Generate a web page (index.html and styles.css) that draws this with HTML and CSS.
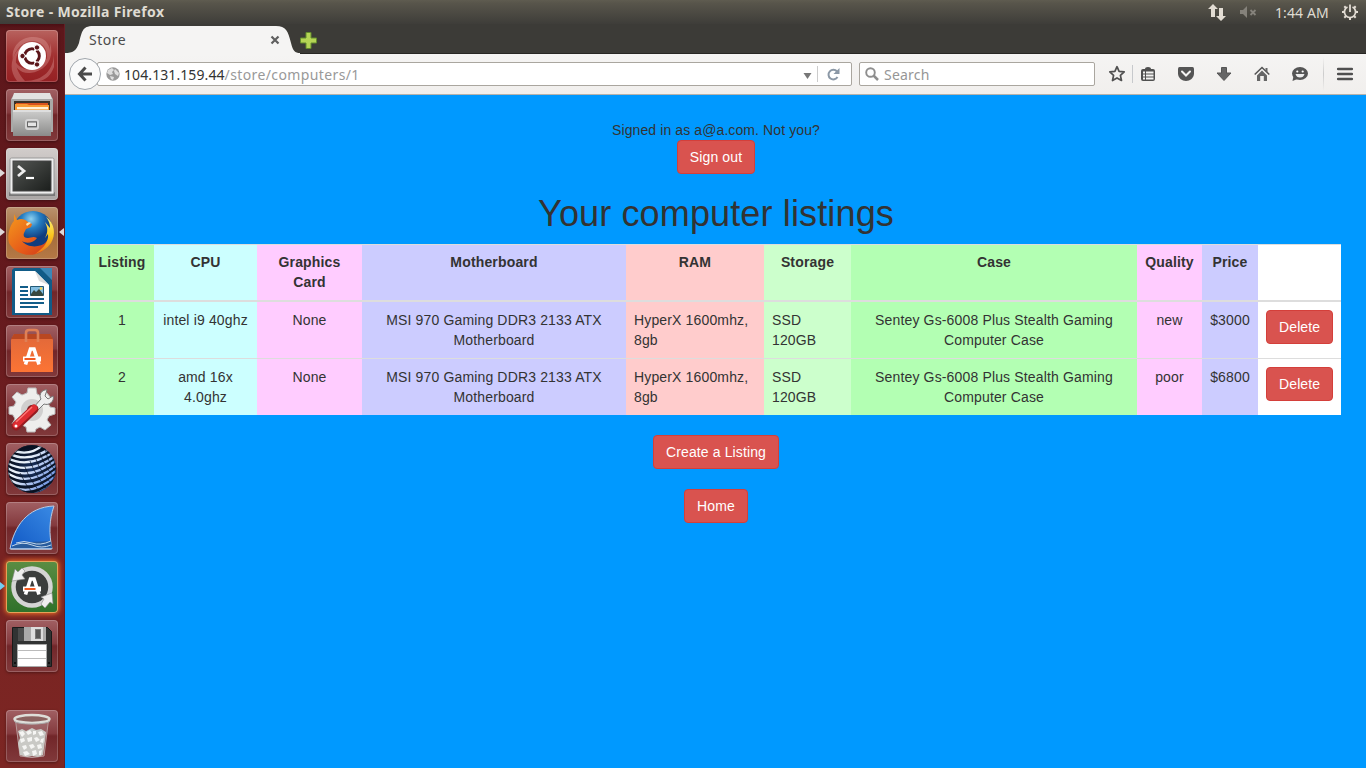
FILE: index.html
```html
<!DOCTYPE html>
<html lang="en">
<head>
<meta charset="utf-8">
<title>Store</title>
<link rel="stylesheet" href="styles.css">
</head>
<body>
<header class="panel">
  <span class="panel-title">Store - Mozilla Firefox</span>
  <div class="indicators">
    <svg class="ind-net" width="20" height="20" viewBox="0 0 20 20"><path fill="#e2dcd3" d="M6 2l5 5H8v8H4V7H1zM14 19l-5-5h3V6h4v8h3z"/></svg>
    <svg class="ind-sound" width="20" height="20" viewBox="0 0 20 20"><path fill="#85827b" d="M1 8h3l4-4v12l-4-4H1z"/><path stroke="#85827b" stroke-width="1.800" d="M11.500 8l5 5m0-5l-5 5"/></svg>
    <span class="clock">1:44 AM</span>
    <svg class="ind-gear" width="18" height="18" viewBox="0 0 18 18"><g fill="none" stroke="#e2dcd3"><path stroke-width="1.800" d="M6.500 4a5.600 5.600 0 1 0 5 0M9 1.500V9"/><path stroke-width="2" d="M1 9h2.500M14.500 9H17M9 14.500V17M3.300 3.300L5 5M14.700 3.300L13 5M3.300 14.700L5 13M14.700 14.700L13 13"/></g></svg>
  </div>
</header>
<div class="desktop">
  <nav class="launcher">
    <div class="tile tile-dash"><svg viewBox="0 0 52 52"><g fill="#f4c1bd" opacity=".28"><path d="M7 31C4 14 19 4 34 8c11 3 14 19 4 29 5-9 4-19-4-24C22 7 9 16 7 31z"/><path d="M11 51C-1 36 9 18 22 12 8 22 5 36 19 51zM44 13c5 15-4 28-20 30-9 1-16-6-17-15 4 8 10 12 18 11 12-1 20-12 19-26z"/><path d="M19 51c18 0 29-11 29-28v14c-3 8-8 13-15 14z"/></g><circle cx="26" cy="26" r="14" fill="#fff"/><circle cx="26" cy="26" r="7.300" fill="none" stroke="#5b1519" stroke-width="3"/><path d="M26 26H16M26 26l5-9M26 26l5 9" stroke="#fff" stroke-width="2"/><circle cx="26" cy="26" r="5.500" fill="#fff"/><g fill="#5b1519" stroke="#fff"><circle cx="16.500" cy="26" r="2.700"/><circle cx="31" cy="17.500" r="2.700"/><circle cx="31" cy="34.500" r="2.700"/></g></svg></div>
    <div class="tile"><svg viewBox="0 0 52 52"><defs><linearGradient id="metal" x2="0" y2="1"><stop stop-color="#c9c9c8"/><stop offset="1" stop-color="#8b8b8a"/></linearGradient></defs><path fill="#a9a9a8" d="M9 4h34l4 6v33H5V10z"/><path fill="#e2e2e1" d="M8 4h36l2 6H6z"/><path fill="#3b3128" d="M8 12h36v11H8z"/><path fill="#d7521e" d="M10 14h32v7H10z"/><path fill="#f89a34" d="M9 15h12l2 1h20v6H9z"/><path fill="#fff1d5" d="M11 18h31v2H11z"/><path fill="#f4b469" d="M11 20h31v2H11z"/><path fill="#dedede" d="M7 21h38v2H7z"/><path fill="url(#metal)" d="M7 23h38v24H7z"/><rect x="20" y="31" width="12" height="9" rx="2" fill="#a5a5a5" stroke="#d6d6d6" stroke-width="2"/><rect x="21.500" y="33" width="9" height="4.500" fill="#e5e5e5" stroke="#666"/></svg></div>
    <div class="tile tile-terminal"><i class="arrow"></i><svg viewBox="0 0 52 52"><defs><linearGradient id="screen" x2="1" y2="1"><stop stop-color="#535653"/><stop offset="1" stop-color="#1b1e1c"/></linearGradient></defs><path fill="#777" d="M3 44h46v4H3z"/><rect x="4" y="10" width="44" height="36" rx="1.500" fill="#eee" stroke="#999"/><rect x="7" y="13" width="38" height="30" fill="url(#screen)" stroke="#444"/><path d="M12 18l6 5-6 5" stroke="#eee" stroke-width="2.800" fill="none"/><path d="M20 30h8" stroke="#fff" stroke-width="2.200"/></svg></div>
    <div class="tile tile-firefox"><i class="arrow"></i><i class="arrow arrow-right"></i><svg viewBox="0 0 52 52"><defs><radialGradient id="globe" cx=".45" cy=".2"><stop stop-color="#8ed1f0"/><stop offset=".45" stop-color="#2680c4"/><stop offset="1" stop-color="#113c7e"/></radialGradient><linearGradient id="fox" x2="1" y2="1"><stop stop-color="#f49a1e"/><stop offset=".6" stop-color="#e65a19"/><stop offset="1" stop-color="#c7351b"/></linearGradient><linearGradient id="tail" x2="0" y2="1"><stop stop-color="#fff277"/><stop offset=".5" stop-color="#fbc51f"/><stop offset="1" stop-color="#ed751a"/></linearGradient></defs><circle cx="27" cy="24" r="20" fill="url(#globe)"/><path fill="url(#fox)" d="M8 7l3 6c4-2 8-1 11 2l4 2-1 3-5 2-2 4c-1 3 0 5 4 5 3 0 5-2 9 0-3 5-11 6-15 3 5 7 19 7 24 1 3-4 4-7 7-8-3 10-9 18-17 20-11 3-22-2-27-11C1 28 4 18 8 14z"/><path fill="url(#tail)" d="M40 10c9 6 10 18 5 26-4 6-10 9-16 11 9-6 14-13 13-20l-3 4c3-6 3-10 0-16l5 6c0-4-1-7-4-11z"/><path fill="#ffe1a2" d="M20 17c2-2 4-2 5-1l-4 3z"/></svg></div>
    <div class="tile"><svg viewBox="0 0 52 52"><path fill="#115b87" d="M8 2h27l11 12v35H6V4z"/><path fill="#3b87b6" d="M34 2h12v12z"/><path fill="#fff" d="M9 5h20l14 14v28H9z"/><path fill="#ddd" d="M29 5l4 10 10 4z"/><g stroke="#125d89" stroke-width="2"><path d="M14 21h8M14 25h8M14 29h8M14 33h24M14 37h24M14 41h18"/></g><path fill="#83bee1" stroke="#235b78" d="M24.500 20.500h13v9h-13z"/><path fill="#37483f" d="M25 28l3-4 2 2 3-3 4 5v2H25z"/><circle cx="35" cy="22.500" r="1.300" fill="#ffd44b"/></svg></div>
    <div class="tile"><svg viewBox="0 0 52 52"><defs><linearGradient id="bag" x2="0" y2="1"><stop stop-color="#e0683a"/><stop offset="1" stop-color="#fc7434"/></linearGradient></defs><path fill="url(#bag)" d="M5 15l3-6h36l3 6v32H5z"/><path fill="#b94721" d="M5 14l3-5h36l3 5z"/><path d="M20 17V8q0-3 3-3h6q3 0 3 3v9" fill="none" stroke="#df8056" stroke-width="2.600"/><path fill="none" stroke="#fff" stroke-width="3.600" d="M19.500 39.500L24.500 24h3.500l5 15.500"/><path fill="#fff" d="M17 31.500h18v5H17z"/><path fill="#f15a23" d="M18.500 33h11v2h-11z"/></svg></div>
    <div class="tile"><svg viewBox="0 0 52 52"><path fill="#eeeeec" stroke="#bbb" d="M22 4h8l1 6 4 2 5-4 5 6-3 5 2 4 5 1v6l-6 2-2 4 4 5-6 5-5-3-4 2-1 3h-8l-1-5-4-2-5 4-5-5 3-5-2-4-4-1v-7l5-1 2-4-4-5 5-5 5 3 5-2z"/><circle cx="26" cy="26" r="11" fill="#d0cfce"/><circle cx="26" cy="26" r="5" fill="#792b2c"/><path fill="#eee" stroke="#777" d="M27 24l8-9c-3-5 2-10 6-9l-2 6 3 3 5-3c2 5-4 10-9 8l-8 8z"/><path stroke="#961c20" stroke-width="9" stroke-linecap="round" d="M10 42l18-17"/><path stroke="#de2d32" stroke-width="6.500" stroke-linecap="round" d="M10 41l18-17"/><path stroke="#ff7774" stroke-width="1.500" d="M10 38l16-15"/><circle cx="10" cy="42" r="1.500" fill="#fff"/></svg></div>
    <div class="tile"><svg viewBox="0 0 52 52"><defs><radialGradient id="orb"><stop stop-color="#183260"/><stop offset="1" stop-color="#070e1b"/></radialGradient><linearGradient id="wire" gradientUnits="userSpaceOnUse" x1="0" y1="0" x2="52" y2="40"><stop stop-color="#c5d5e6"/><stop offset=".4" stop-color="#edf4fb"/><stop offset="1" stop-color="#5682df"/></linearGradient><clipPath id="ball"><circle cx="26" cy="26" r="24"/></clipPath></defs><circle cx="26" cy="26" r="24" fill="url(#orb)"/><g clip-path="url(#ball)" fill="none"><g stroke="url(#wire)" stroke-width="2.300"><path d="M0 14Q22 28 52 6M0 19Q22 34 52 11M0 24Q22 40 52 16M0 29Q22 46 52 21M0 34Q22 52 52 26M0 39Q22 58 52 31M0 44Q22 64 52 36M0 50Q22 69 52 41M0 9Q22 22 46 4M0 4Q22 17 39 0"/></g><g stroke="#0b1524" stroke-width=".9" opacity=".8"><path d="M24 18Q30 34 44 50M29 14Q36 34 50 44M34 10Q40 28 54 40M19 24Q24 38 38 54M14 30Q19 42 30 54M39 5Q42 22 54 33"/></g></g><circle cx="26" cy="26" r="23.500" fill="none" stroke="#0e192c" opacity=".7"/></svg></div>
    <div class="tile"><svg viewBox="0 0 52 52"><defs><linearGradient id="fin" x1="1" y1="0" x2="0" y2="1"><stop stop-color="#3a8ae4"/><stop offset="1" stop-color="#1058c4"/></linearGradient></defs><path fill="url(#fin)" stroke="#b9cbe2" d="M4 47C8 25 21 5 48 4c-5 14-5 28-2 43z"/><path fill="#285c9d" d="M5 46q5-6 13-6t27-1l1 7z"/><path stroke="#c3d7ea" fill="none" d="M6 44q10-5 20-1t19 0M10 41q8-3 16 0t19-2M5 47h40"/></svg></div>
    <div class="tile tile-update"><i class="arrow arrow-blue"></i><svg viewBox="0 0 52 52"><circle cx="26" cy="26" r="18.500" fill="#3b3e3d" stroke="#d4d4d4" stroke-width="4.500"/><path fill="#eee" stroke="#888" stroke-width=".6" d="M6 20l3-12 3 3 4-4 3 3-3 4 3 4zM46 32l-11 4 3 2-3 5 4 4 5-6 3 2z"/><path fill="none" stroke="#fff" stroke-width="3.600" d="M19.500 33.500L24.500 18h3.500l5 15.500"/><path fill="#fff" d="M17 25.500h18v5H17z"/><path fill="#f15a23" d="M18.500 27h11v2h-11z"/></svg></div>
    <div class="tile"><svg viewBox="0 0 52 52"><path fill="#313333" stroke="#191a1a" d="M6.500 7.500h35l4 4v35h-39z"/><path fill="#888" d="M12 8h6v13h-6z" opacity=".3"/><path fill="#aaa" d="M18 7h22v14H18z"/><path fill="#ddd" d="M25 7h12v14H25z"/><rect x="29.500" y="9.500" width="5" height="9" fill="#555" stroke="#777"/><path fill="#fff" stroke="#aaa" d="M11.500 24.500h29v22h-29z"/><path stroke="#bbb" d="M12 30.500h28M12 38.500h28"/><path fill="#111" d="M8 42h2v2H8zm34 0h2v2h-2z"/></svg></div>
    <div class="tile tile-trash"><svg viewBox="0 0 52 52"><path fill="#ddd" fill-opacity=".2" stroke="#b99a9a" d="M9.500 10L14 46q12 3 24 0l4.500-36z"/><path fill="#c9c9c5" d="M12 21l4-2 4 2 6-3 4 2 5-1 5 3-1 9-2 14-5 2-6-1-5 1-7-2-2-12 2-5z"/><g fill="#f5f5f3"><path d="M13 22l4-1 2 3-3 3zM20 22l4-2 2 3-4 2zM27 21l3 0 0 3-3 1zM32 22l4-1 2 4-4 1zM14 29l4-1 1 3-4 2zM21 28l5-1 0 4-4 1zM28 28l3-1 3 3-4 2zM35 29l3-1-1 5-3-1zM16 36l4-1 1 3-3 2zM23 35l4-1 2 3-4 2zM31 35l4-1 1 4-4 1zM17 42l4-1 3 3-5 2zM26 41l4-1 1 4-4 2zM33 41l3-1-1 5-2 0z"/></g><ellipse cx="26" cy="9" rx="17.500" ry="4" fill="#8b6260" stroke="#deded9" stroke-width="2.500"/><path stroke="#aaa" fill="none" d="M8 11c2 4 34 4 36 0"/></svg></div>
  </nav>
  <main class="browser">
    <div class="tabbar">
      <div class="tab">
        <svg class="tab-shape" width="236" height="30" viewBox="0 0 236 30"><path fill="#f5f4f3" d="M0 30v-1C8 29 11 27 14 19 17 8 17 2 28 2H211C221 2 223 7 226 19c2 8 4 10 9 10v1z"/></svg>
        <span class="tab-title">Store</span>
        <svg class="tab-close" width="10" height="10" viewBox="0 0 10 10"><path stroke="#5f5f5f" stroke-width="2.200" d="M1.500 1.500l7 7m0-7l-7 7"/></svg>
      </div>
      <svg class="tab-new" width="17" height="17" viewBox="0 0 17 17"><path fill="#b5d455" stroke="#638c2c" d="M6 .5h5V6h5.500v5H11v5.500H6V11H.5V6H6z"/></svg>
    </div>
    <div class="toolbar">
      <div class="back"><svg width="16" height="16" viewBox="0 0 16 16"><path fill="none" stroke="#4a4a4a" stroke-width="3" d="M8.500 1.500L2.500 8l6 6.500M2.500 8H15"/></svg></div>
      <div class="urlbar">
        <svg width="14" height="14" viewBox="0 0 14 14"><circle cx="7" cy="7" r="6.700" fill="#999"/><path fill="#dedede" d="M2 3l4-2 2 2-2 2 1 2-3 1-3-2zM9 2l4 4-1 3-3-2-1-3zM4 9l4 1-1 3-2-1z"/></svg>
        <span class="url"><b>104.131.159.44</b>/store/computers/1</span>
        <svg class="drop" width="9" height="6" viewBox="0 0 9 6"><path fill="#777" d="M.5 0h8l-4 6z"/></svg>
        <span class="url-sep"></span>
        <svg class="reload" width="13" height="13" viewBox="0 0 13 13"><path fill="none" stroke="#8b98a6" stroke-width="2" d="M10.500 9A4.800 4.800 0 1 1 10 3.500"/><path fill="#8b98a6" d="M12.500 0v6h-6z"/></svg>
      </div>
      <div class="search"><svg width="14" height="14" viewBox="0 0 14 14"><circle cx="5.500" cy="5.500" r="4.300" fill="none" stroke="#8e8e8e" stroke-width="1.900"/><path stroke="#8e8e8e" stroke-width="2.500" d="M8.500 8.500l4.500 4.500"/></svg><span>Search</span></div>
      <div class="tools">
        <svg class="star" width="18" height="18" viewBox="0 0 18 18"><path fill="none" stroke="#505050" stroke-width="1.700" stroke-linejoin="round" d="M9 1.700l2.100 4.700 5.100.5-3.800 3.500 1.100 5.100L9 12.900l-4.500 2.600 1.100-5.100-3.800-3.500 5.100-.5z"/></svg>
        <span class="tool-sep"></span>
        <svg class="clipboard" width="16" height="16" viewBox="0 0 16 16"><path fill="#505050" d="M5 3q0-2 3-2t3 2h2q2 0 2 2v8q0 2-2 2H3q-2 0-2-2V5q0-2 2-2z"/><path fill="#f4f3f2" d="M3 5.500h2v2H3zm3 0h7.500v2H6zM3 8.500h2v2H3zm3 0h7.500v2H6zM3 11.500h2v2H3zm3 0h7.500v2H6z"/></svg>
        <svg class="pocket" width="18" height="16" viewBox="0 0 18 16"><path fill="#555" d="M2.500 1h13Q17 1 17 3v4.500C17 12 13 15 9 15s-8-3-8-7.500V3q0-2 1.500-2z"/><path fill="none" stroke="#f5f4f3" stroke-width="2" stroke-linecap="round" d="M5 5.500l4 4 4-4"/></svg>
        <svg class="download" width="16" height="16" viewBox="0 0 16 16"><path fill="#666" stroke="#555" stroke-linejoin="round" d="M5.500 1.500h5V7h4.500L8 14.500 1 7h4.500z"/></svg>
        <svg class="home" width="16" height="16" viewBox="0 0 16 16"><path fill="none" stroke="#555" stroke-width="1.600" d="M.7 8.500L8 1.500l7.300 7"/><path fill="#666" d="M8 4.500l5 5V15H9.800v-5H6.200v5H3V9.500zM11.500 2h2v4.500l-2-2z"/></svg>
        <svg class="hello" width="18" height="16" viewBox="0 0 18 16"><ellipse cx="9" cy="7.500" rx="8" ry="6.500" fill="#555"/><path fill="#555" d="M2.500 10L1.500 15l5-2z"/><circle cx="6.300" cy="5.500" r="1.100" fill="#fff"/><circle cx="11.700" cy="5.500" r="1.100" fill="#fff"/><path d="M4.500 8h9q-1 3.500-4.500 3.500T4.500 8z" fill="#eee"/></svg>
        <span class="menu-sep"></span>
        <svg class="menu" width="18" height="14" viewBox="0 0 18 14"><path stroke="#505050" stroke-width="2.600" stroke-linecap="round" d="M2.200 2h13.600M2.200 7h13.600M2.200 12h13.600"/></svg>
      </div>
    </div>
    <section class="page">
      <p class="signed">Signed in as a@a.com. Not you?</p>
      <button class="btn">Sign out</button>
      <h1>Your computer listings</h1>
      <table class="listings">
        <colgroup><col class="w-listing"><col class="w-cpu"><col class="w-gpu"><col class="w-board"><col class="w-ram"><col class="w-storage"><col class="w-case"><col class="w-quality"><col class="w-price"><col class="w-action"></colgroup>
        <thead><tr><th class="green">Listing</th><th class="cyan">CPU</th><th class="pink">Graphics Card</th><th class="violet">Motherboard</th><th class="peach">RAM</th><th class="mint">Storage</th><th class="green">Case</th><th class="pink">Quality</th><th class="violet">Price</th><th></th></tr></thead>
        <tbody>
          <tr><td class="green">1</td><td class="cyan">intel i9 40ghz</td><td class="pink">None</td><td class="violet">MSI 970 Gaming DDR3 2133 ATX Motherboard</td><td class="peach left">HyperX 1600mhz, 8gb</td><td class="mint left">SSD 120GB</td><td class="green">Sentey Gs-6008 Plus Stealth Gaming Computer Case</td><td class="pink">new</td><td class="violet">$3000</td><td><button class="btn">Delete</button></td></tr>
          <tr><td class="green">2</td><td class="cyan">amd 16x 4.0ghz</td><td class="pink">None</td><td class="violet">MSI 970 Gaming DDR3 2133 ATX Motherboard</td><td class="peach left">HyperX 1600mhz, 8gb</td><td class="mint left">SSD 120GB</td><td class="green">Sentey Gs-6008 Plus Stealth Gaming Computer Case</td><td class="pink">poor</td><td class="violet">$6800</td><td><button class="btn">Delete</button></td></tr>
        </tbody>
      </table>
      <button class="btn spaced">Create a Listing</button>
      <button class="btn spaced">Home</button>
    </section>
  </main>
</div>
</body>
</html>
```
FILE: styles.css
```css
* { box-sizing: border-box; }
body { margin: 0; width: 1366px; height: 768px; overflow: hidden; font-family: "Noto Sans", sans-serif; display: flex; flex-direction: column; }
svg { display: block; flex: none; }

.panel { height: 24px; flex: none; display: flex; align-items: center; justify-content: space-between; padding: 0 7px 0 6px; background: linear-gradient(#5f5c50, #58554b 3px, #3e3d39); color: #dfdbd2; }
.panel-title { font-size: 14px; font-weight: 700; letter-spacing: .36px; line-height: 24px; white-space: nowrap; }
.indicators { display: flex; align-items: center; height: 24px; }
.ind-net { margin-right: 12px; }
.ind-sound { margin-right: 16px; }
.clock { font-size: 14px; width: 54px; letter-spacing: .1px; white-space: nowrap; margin-right: 12px; }

.desktop { flex: 1; display: flex; min-height: 0; }
.launcher { width: 65px; flex: none; display: flex; flex-direction: column; gap: 7px; padding: 6px 0 6px 6px; background: linear-gradient(#4c0f14, #5d171b 5px, #64191d 35%, #782322 70%, #7c2623); border-right: 1px solid #651f26; }
.tile { position: relative; width: 52px; height: 52px; border-radius: 4px; flex: none; background: linear-gradient(#a16063, #843a3e 45%, #712629 50%, #81393b); box-shadow: inset 0 0 0 1px rgba(255,255,255,.2), 0 1px 3px rgba(0,0,0,.35); }
.tile svg { width: 52px; height: 52px; }
.tile-dash { background: linear-gradient(#b8635f, #a23030 50%, #952023); }
.tile-terminal { background: linear-gradient(#d2cdcb, #aaa6a5); }
.tile-firefox { background: linear-gradient(#bb936e, #a36c3c 50%, #b57945); }
.tile-update { background: linear-gradient(#5b8d43, #2e7129); box-shadow: 0 0 5px 1px #ef7228, inset 0 0 0 1px #e6a159; }
.tile-trash { margin-top: auto; }
.arrow { position: absolute; left: -6px; top: 21px; border: solid transparent; border-width: 4px 0 4px 5px; border-left-color: #ddd8d8; }
.arrow-right { left: auto; right: -6px; border-width: 4px 5px 4px 0; border-right-color: #ddd8d8; }
.arrow-blue { border-left-color: #72cdf4; }

.browser { flex: 1; display: flex; flex-direction: column; min-width: 0; }
.tabbar { height: 30px; flex: none; display: flex; align-items: flex-start; background: #3c3b37; border-bottom: 1px solid #282724; }
.tab { position: relative; width: 232px; height: 30px; display: flex; align-items: center; padding: 2px 17px 0 24px; justify-content: space-between; }
.tab-shape { position: absolute; left: 0; top: 0; }
.tab-title { position: relative; top: -1px; font-size: 14px; color: #4c4c4c; letter-spacing: .5px; }
.tab-close { position: relative; }
.tab-new { margin: 8px 0 0 3px; }
.toolbar { height: 41px; flex: none; display: flex; align-items: center; padding-left: 4px; background: linear-gradient(#f5f4f3, #f1efed); border-bottom: 1px solid #b6b2ac; }
.back { width: 32px; height: 32px; flex: none; border: 1px solid #a0a6ac; border-radius: 50%; background: #fafafa; display: flex; align-items: center; justify-content: center; z-index: 1; }
.urlbar { width: 755px; height: 24px; margin-left: -4px; flex: none; display: flex; align-items: center; padding: 0 11px 0 8px; background: #fff; border: 1px solid #aaa69f; border-radius: 2px; color: #999; font-size: 14px; }
.url { margin-left: 4px; flex: 1; letter-spacing: .38px; white-space: nowrap; line-height: 20px; padding-top: 2px; }
.url b { font-weight: 400; color: #333; letter-spacing: .09px; }
.drop { margin-top: 3px; }
.url-sep { width: 1px; height: 16px; background: #ccc; margin: 0 9px 0 5px; }
.search { width: 236px; height: 24px; margin-left: 7px; flex: none; display: flex; align-items: center; gap: 5px; padding-left: 5px; background: #fff; border: 1px solid #aaa69f; border-radius: 2px; color: #969696; font-size: 14px; letter-spacing: .2px; line-height: 20px; }
.search span { padding-top: 2px; }
.tools { display: flex; align-items: center; margin-left: 13px; }
.tool-sep { width: 1px; height: 18px; background: #c7c9cc; margin: 0 7px 0 6px; }
.pocket { margin-left: 21px; }
.download { margin-left: 21px; }
.home { margin-left: 22px; }
.hello { margin-left: 21px; }
.menu-sep { width: 1px; height: 34px; background: linear-gradient(transparent, #ccc, transparent); margin: 0 12px 0 14px; }

.page { flex: 1; background: #09f; padding: 25px 24px 0 25px; display: flex; flex-direction: column; align-items: center; font: 14px/20px "Liberation Sans", Arial, sans-serif; color: #333; }
.signed { margin: 0; letter-spacing: .1px; }
.btn { height: 34px; flex: none; padding: 6px 12px; border: 1px solid #d43f3a; border-radius: 4px; background: #d9534f; color: #fff; font: 14px/20px "Liberation Sans", Arial, sans-serif; letter-spacing: .12px; white-space: nowrap; display: block; }
.spaced { margin-top: 20px; }
h1 { margin: 20px 0 10px; font-size: 36px; line-height: 40px; font-weight: 400; letter-spacing: .14px; }
.listings { width: 1251px; align-self: flex-start; table-layout: fixed; border-collapse: separate; border-spacing: 0; background: #fff; text-align: center; }
th { padding: 7px 7px 8px; border-top: 1px solid #ddd; border-bottom: 2px solid #ddd; vertical-align: top; letter-spacing: .16px; }
td { padding: 8px; height: 56px; vertical-align: top; letter-spacing: .15px; }
td:nth-child(9) { padding: 8px 7px; }
tbody tr + tr td { border-top: 1px solid #ddd; height: 57px; }
td.left { text-align: left; }
.green { background: #b3ffb3; }
.cyan { background: #cff; }
.pink { background: #fcf; }
.violet { background: #ccf; }
.peach { background: #fcc; }
.mint { background: #cfc; }
.w-listing { width: 64px; }
.w-cpu { width: 103px; }
.w-gpu { width: 105px; }
.w-board { width: 264px; }
.w-ram { width: 138px; }
.w-storage { width: 87px; }
.w-case { width: 286px; }
.w-quality { width: 65px; }
.w-price { width: 56px; }
.w-action { width: 83px; }
```
